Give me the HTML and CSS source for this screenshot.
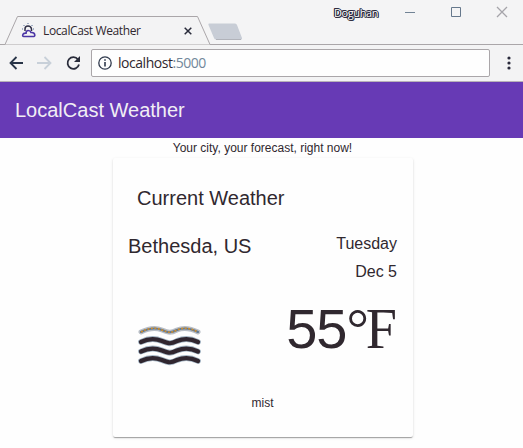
FILE: index.html
```html
<!DOCTYPE html>
<html lang="en">
<head>
<meta charset="utf-8">
<title>LocalCast Weather</title>
<link rel="stylesheet" href="styles.css">
</head>
<body>
<header class="strip">
  <div class="tab">
    <svg class="shape" width="214" height="30" viewBox="0 0 214 30"><path d="M0 28.5H5L17.500 .5H197.500L210 28.500H214" fill="#f3f3f4" stroke="#aaa6a9"/></svg>
    <svg class="favicon" width="16" height="16" viewBox="0 0 16 16" fill="none"><path d="M4 8V6Q4 3 7 3T10.500 6V8" stroke="#303047" stroke-width="1.500"/><path d="M3 13.500Q1 13.200 2 11.300Q3 10 5 10.200Q5 7.500 7.200 7.500Q9.500 7.500 10 9.500Q13.500 9.200 13.800 12Q14 13.500 12 13.500Z" stroke="#4b35a5" stroke-width="1.600"/><path d="M7 0V1M2.500 2L3.500 3M11.500 2L10.500 3M1 6H2M12 6H13" stroke="#56709b"/></svg>
    <span class="tab-title">LocalCast Weather</span>
    <svg class="tab-close" width="8" height="8" viewBox="0 0 8 8"><path d="M.7.7L7.300 7.300M7.300.7L.7 7.300" stroke="#292b3b" stroke-width="1.500"/></svg>
  </div>
  <svg class="new-tab" width="35" height="18" viewBox="0 0 35 18"><path d="M1 .5H27Q28.500.5 29 2L34 15Q34.500 16.500 33 16.500H8Q6.500 16.500 6 15L.5 2Q0 .5 1 .5Z" fill="#c8cdd6"/><path d="M8 16.500H33" stroke="#b1b3ba"/></svg>
  <div class="window-tools">
    <span class="user">Doguhan</span>
    <svg width="108" height="14" viewBox="0 0 108 14" fill="none"><path d="M0 6.500H10" stroke="#718395"/><path d="M46.500 1.500H55.500V10.500H46.500Z" stroke="#66788c"/><path d="M92 1L102 11M102 1L92 11" stroke="#a5a4aa" stroke-width="1.300"/></svg>
  </div>
</header>
<nav class="toolbar">
  <svg class="nav-icons" width="72" height="16" viewBox="0 0 72 16" fill="none"><g stroke-width="1.800"><path d="M14 8H1.500M7.500 2L1.500 8L7.500 14" stroke="#283447"/><path d="M28 8H41M35.500 2L41.500 8L35.500 14" stroke="#c8d0d9"/><path d="M69 4.500A5.800 5.800 0 1 0 70 9.500" stroke="#292c3b"/></g><path d="M71 1V7H65Z" fill="#292c3b"/></svg>
  <div class="address">
    <svg width="14" height="14" viewBox="0 0 14 14"><circle cx="7" cy="7" r="6.200" fill="none" stroke="#303a4d" stroke-width="1.300"/><path d="M7 6V10.500M7 3.200V4.800" stroke="#303a4d" stroke-width="1.600"/></svg>
    <span class="url">localhost<span class="port">:5000</span></span>
  </div>
  <svg class="menu" width="4" height="14" viewBox="0 0 4 14" fill="#292a3b"><circle cx="2" cy="2" r="1.600"/><circle cx="2" cy="7" r="1.600"/><circle cx="2" cy="12" r="1.600"/></svg>
</nav>
<div class="app-bar"><span>LocalCast Weather</span></div>
<main>
  <p class="tagline"><span>Your city, your forecast, right now!</span></p>
  <section class="card">
    <h1>Current Weather</h1>
    <div class="row">
      <span class="city">Bethesda, US</span>
      <div class="date"><span class="day">Tuesday</span><span>Dec 5</span></div>
    </div>
    <div class="reading">
      <svg class="waves" width="64" height="42" viewBox="0 0 64 42" fill="none" stroke-linecap="round">
        <path d="M3 7C11 3 17 2 24 5C31 8 33 8 39 5C46 2 52 3 60 7" stroke="#b9bec6" stroke-width="5"/>
        <path d="M3 7C11 3 17 2 24 5C31 8 33 8 39 5C46 2 52 3 60 7" stroke="#5f7995" stroke-width="2"/>
        <path d="M3 7C11 3 17 2 24 5C31 8 33 8 39 5C46 2 52 3 60 7" stroke="#d28f2c" stroke-width="1.600" stroke-linecap="butt" stroke-dasharray="2 1.500"/>
        <g stroke="#a5b6c5" stroke-width="5.800"><path id="w" d="M3 17C11 13 17 13 24 16C31 19 33 19 39 16C46 13 52 13 60 17"/><use href="#w" y="9.500"/><use href="#w" y="19"/></g>
        <g stroke="#30262f" stroke-width="4.200"><path d="M3 17C11 13 17 13 24 16C31 19 33 19 39 16C46 13 52 13 60 17"/><path d="M3 26.500C11 22.500 17 22.500 24 25.500C31 28.500 33 28.500 39 25.500C46 22.500 52 22.500 60 26.500"/><path d="M3 36C11 32 17 32 24 35C31 38 33 38 39 35C46 32 52 32 60 36"/></g>
      </svg>
      <div class="temp"><span class="value">55</span><span class="unit">°F</span></div>
    </div>
    <p class="condition">mist</p>
  </section>
</main>
</body>
</html>
```
FILE: styles.css
```css
* { box-sizing: border-box; }
body { margin: 0; height: 448px; overflow: hidden; background: #fefefe; color: #30282f; font-family: "Liberation Sans", sans-serif; }
svg { display: block; flex: none; }
p, h1 { margin: 0; }
.strip { display: flex; height: 45px; background: linear-gradient(#aaa6a9, #aaa6a9) 0 44px / 100% 1px no-repeat #f4f4f5; }
.tab { position: relative; display: flex; flex: none; width: 208px; height: 45px; padding: 16px 0 0 21px; }
.shape { position: absolute; left: 0; top: 16px; }
.favicon { position: relative; margin-top: 7px; }
.tab-title { position: relative; width: 98px; margin: 7px 0 0 6px; font: 12px/16px "Open Sans", sans-serif; letter-spacing: -.38px; white-space: nowrap; }
.tab-close { position: relative; margin: 11px 0 0 43px; }
.new-tab { margin-top: 23px; }
.window-tools { display: flex; margin-left: auto; }
.user { width: 47px; margin: 5px 24px 0 0; color: #fff; font: 11px/16px "Open Sans", sans-serif; letter-spacing: -.4px; text-shadow: 1px 0 #28273a, -1px 0 #28273a, 0 1px #28273a, 0 -1px #28273a, 1px 1px #28273a, -1px -1px #28273a; }
.window-tools svg { margin: 6px 10px 0 0; }
.toolbar { display: flex; align-items: center; height: 37px; padding: 0 12px 0 9px; background: #f3f3f4; border-bottom: 1px solid #b8b2b8; }
.address { display: flex; align-items: center; width: 399px; height: 28px; margin-left: 10px; padding-left: 6px; background: #fefefe; border: 1px solid #aaa6a9; border-radius: 2px; }
.url { margin-left: 6px; font: 14px/20px "Open Sans", sans-serif; letter-spacing: -.46px; }
.port { color: #72879a; }
.menu { margin-left: auto; }
.app-bar { display: flex; align-items: center; height: 56px; padding-left: 15px; background: #673ab5; color: #f1eef4; font-size: 20px; }
.tagline { height: 20px; padding-left: 2px; font-size: 12px; line-height: 20px; text-align: center; }
.card { width: 300px; height: 279px; margin: 0 auto 0 113px; padding: 24px 16px 0 15px; border-radius: 2px; background: #fefefe; box-shadow: 0 2px 1px -1px #0003, 0 1px 1px #00000024, 0 1px 3px #0000001f; }
h1 { padding-left: 9px; font-size: 20px; font-weight: 400; line-height: 32px; }
.row { display: flex; justify-content: space-between; margin-top: 16px; }
.city { font-size: 20px; line-height: 32px; }
.date { display: flex; flex-direction: column; align-items: flex-end; font-size: 16px; line-height: 28px; }
.reading { display: flex; justify-content: space-between; height: 91px; padding-left: 10px; }
.waves { margin-top: 39px; }
.temp { display: flex; font-size: 56px; line-height: 86px; white-space: nowrap; }
.value { letter-spacing: -1px; }
.unit { padding-right: 3px; font-family: "Liberation Serif", serif; letter-spacing: -3px; }
.condition { margin-top: 16px; font-size: 12px; line-height: 20px; text-align: center; }
```
